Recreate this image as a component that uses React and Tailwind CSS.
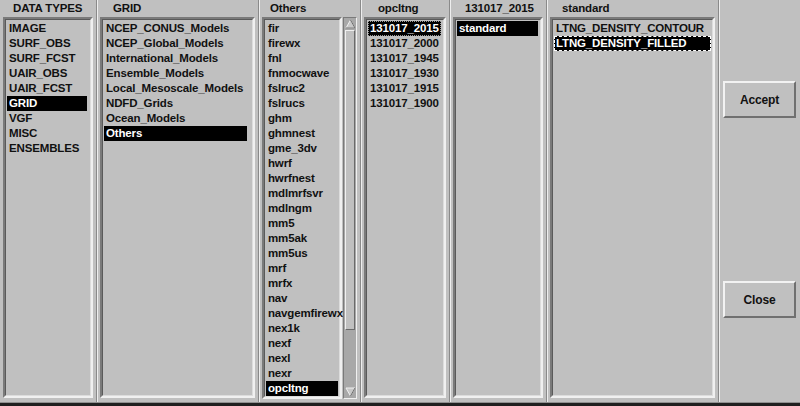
import React from "react";

const font = { fontFamily: '"Liberation Sans", Arial, sans-serif' };

function Item({ text, selected, focus }) {
  let cls = "h-[15px] leading-[15px] px-[2px] whitespace-nowrap ";
  if (selected) cls += "bg-black text-white ";
  else cls += "text-[#111] ";
  if (focus === "dash") cls += "outline outline-1 outline-dashed outline-white -outline-offset-1 ";
  if (focus === "dot") cls += "outline outline-1 outline-dotted outline-[#999] -outline-offset-1 ";
  return <div className={cls}>{text}</div>;
}

function ListBox({ items, selected, focus, pr }) {
  return (
    <div className="flex-1 min-w-0 border-2 border-t-[#7a7a7a] border-l-[#7a7a7a] border-b-[#f0f0f0] border-r-[#f0f0f0] flex">
      <div className={`flex-1 min-w-0 border border-t-[#5a5a5a] border-l-[#5a5a5a] border-b-[#dcdcdc] border-r-[#dcdcdc] pt-[1px] pl-[1px] ${pr}`}>
        {items.map((t) => (
          <Item key={t} text={t} selected={t === selected} focus={t === selected ? focus : null} />
        ))}
      </div>
    </div>
  );
}

function Column({ title, width, items, selected, focus, scroll, pl = "pl-[14px]", pr = "pr-[1px]" }) {
  return (
    <div className={`${width} shrink-0 flex flex-col border-r border-r-[#8a8a8a] shadow-[1px_0_0_#eeeeee]`}>
      <div className={`h-[17px] leading-[17px] ${pl} text-[#111] whitespace-nowrap`}>{title}</div>
      <div className="flex-1 mx-[3px] mb-[4px] flex gap-[1px]">
        <ListBox items={items} selected={selected} focus={focus} pr={pr} />
        {scroll ? <Scrollbar /> : null}
      </div>
    </div>
  );
}

function Scrollbar() {
  return (
    <div className="w-[14px] shrink-0 border border-t-[#7a7a7a] border-l-[#7a7a7a] border-b-[#f0f0f0] border-r-[#f0f0f0] bg-[#a8a8a8] flex flex-col items-center pt-[1px] pb-[1px]">
      <svg width="11" height="10" viewBox="0 0 11 10">
        <polygon points="5.5,1 10,9 1,9" fill="#c8c8c8" stroke="#f0f0f0" strokeWidth="1" />
        <line x1="10" y1="9" x2="1" y2="9" stroke="#6a6a6a" />
        <line x1="10" y1="9" x2="5.5" y2="1" stroke="#6a6a6a" />
      </svg>
      <div className="w-[10px] h-[300px] mt-[1px] bg-[#c0c0c0] border border-t-[#f0f0f0] border-l-[#f0f0f0] border-b-[#6a6a6a] border-r-[#6a6a6a]" />
      <div className="flex-1" />
      <svg width="11" height="10" viewBox="0 0 11 10">
        <polygon points="1,1 10,1 5.5,9" fill="#c8c8c8" stroke="#f0f0f0" strokeWidth="1" />
        <line x1="10" y1="1" x2="5.5" y2="9" stroke="#6a6a6a" />
      </svg>
    </div>
  );
}

function Button({ label }) {
  return (
    <div className="h-[37px] mx-[4px] border-2 border-t-[#f2f2f2] border-l-[#f2f2f2] border-b-[#707070] border-r-[#707070] flex items-center justify-center text-[#111] text-[12px]">
      {label}
    </div>
  );
}

export default function App() {
  return (
    <div className="w-[800px] h-[406px] bg-[#c0c0c0] overflow-hidden text-[11.5px] font-bold tracking-[-0.15px]" style={font}>
      <div className="h-[403px] flex border-b border-b-[#909090]">
        <Column
          title="DATA TYPES"
          width="w-[97px]"
          items={["IMAGE", "SURF_OBS", "SURF_FCST", "UAIR_OBS", "UAIR_FCST", "GRID", "VGF", "MISC", "ENSEMBLES"]}
          selected="GRID"
          pl="pl-[13px]"
          pr="pr-[3px]"
        />
        <Column
          title="GRID"
          width="w-[162px]"
          items={["NCEP_CONUS_Models", "NCEP_Global_Models", "International_Models", "Ensemble_Models", "Local_Mesoscale_Models", "NDFD_Grids", "Ocean_Models", "Others"]}
          selected="Others"
          pl="pl-[16px]"
          pr="pr-[5px]"
        />
        <Column
          title="Others"
          width="w-[102px]"
          items={["fir", "firewx", "fnl", "fnmocwave", "fslruc2", "fslrucs", "ghm", "ghmnest", "gme_3dv", "hwrf", "hwrfnest", "mdlmrfsvr", "mdlngm", "mm5", "mm5ak", "mm5us", "mrf", "mrfx", "nav", "navgemfirewx", "nex1k", "nexf", "nexl", "nexr", "opcltng"]}
          selected="opcltng"
          pl="pl-[11px]"
          pr="pr-[1px]"
          scroll
        />
        <Column
          title="opcltng"
          width="w-[89px]"
          items={["131017_2015", "131017_2000", "131017_1945", "131017_1930", "131017_1915", "131017_1900"]}
          selected="131017_2015"
          focus="dot"
          pl="pl-[17px]"
          pr="pr-[2px]"
        />
        <Column
          title="131017_2015"
          width="w-[97px]"
          items={["standard"]}
          selected="standard"
          pl="pl-[15px]"
          pr="pr-[2px]"
        />
        <Column
          title="standard"
          width="w-[172px]"
          items={["LTNG_DENSITY_CONTOUR", "LTNG_DENSITY_FILLED"]}
          selected="LTNG_DENSITY_FILLED"
          focus="dash"
          pl="pl-[15px]"
        />
        <div className="flex-1 flex flex-col pt-[81px]">
          <Button label="Accept" />
          <div className="h-[163px]" />
          <Button label="Close" />
        </div>
      </div>
      <div className="h-[3px] bg-[#202020]" />
    </div>
  );
}
